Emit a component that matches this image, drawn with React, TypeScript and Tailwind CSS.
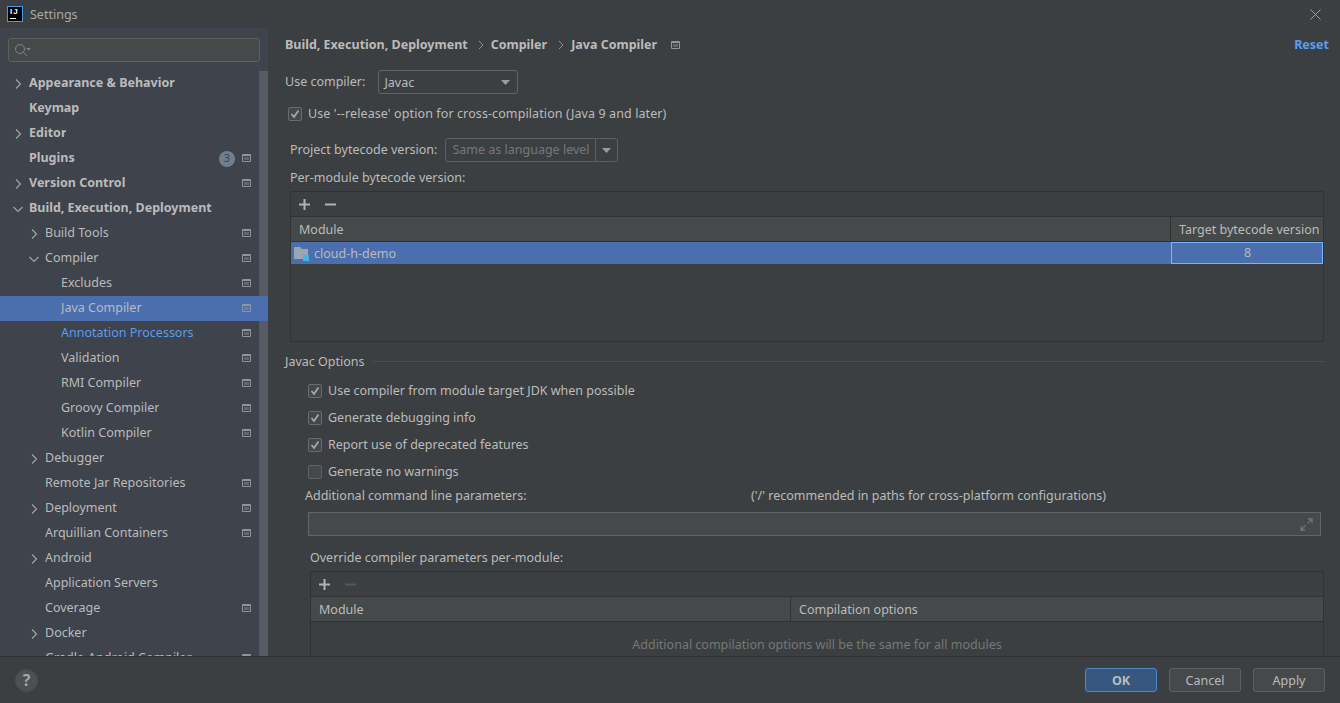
import type React from "react"

type TreeRow = {
  label: string
  level: number
  arrow?: "right" | "down"
  bold?: boolean
  icon?: boolean
  badge?: string
  selected?: boolean
  link?: boolean
}

const treeRows: TreeRow[] = [
  { label: "Appearance & Behavior", level: 0, arrow: "right", bold: true },
  { label: "Keymap", level: 0, bold: true },
  { label: "Editor", level: 0, arrow: "right", bold: true },
  { label: "Plugins", level: 0, bold: true, icon: true, badge: "3" },
  { label: "Version Control", level: 0, arrow: "right", bold: true, icon: true },
  { label: "Build, Execution, Deployment", level: 0, arrow: "down", bold: true },
  { label: "Build Tools", level: 1, arrow: "right", icon: true },
  { label: "Compiler", level: 1, arrow: "down", icon: true },
  { label: "Excludes", level: 2, icon: true },
  { label: "Java Compiler", level: 2, icon: true, selected: true },
  { label: "Annotation Processors", level: 2, icon: true, link: true },
  { label: "Validation", level: 2, icon: true },
  { label: "RMI Compiler", level: 2, icon: true },
  { label: "Groovy Compiler", level: 2, icon: true },
  { label: "Kotlin Compiler", level: 2, icon: true },
  { label: "Debugger", level: 1, arrow: "right" },
  { label: "Remote Jar Repositories", level: 1, icon: true },
  { label: "Deployment", level: 1, arrow: "right", icon: true },
  { label: "Arquillian Containers", level: 1, icon: true },
  { label: "Android", level: 1, arrow: "right" },
  { label: "Application Servers", level: 1 },
  { label: "Coverage", level: 1, icon: true },
  { label: "Docker", level: 1, arrow: "right" },
  { label: "Gradle-Android Compiler", level: 1, icon: true },
]

const optionRows = [
  { label: "Use compiler from module target JDK when possible", checked: true },
  { label: "Generate debugging info", checked: true },
  { label: "Report use of deprecated features", checked: true },
  { label: "Generate no warnings", checked: false },
]

function ProjectIcon({ className = "" }: { className?: string }) {
  return (
    <svg width="9" height="8" viewBox="0 0 9 8" className={`shrink-0 ${className}`}>
      <path d="M0.5 0.5h8v7h-8z" fill="none" stroke="currentColor" />
      <path d="M1 1h7v1H1z" fill="currentColor" />
      <path d="M2 3h5v3H2z" fill="currentColor" opacity="0.45" />
    </svg>
  )
}

function Arrow({ dir }: { dir: "right" | "down" }) {
  return (
    <svg width="10" height="10" viewBox="0 0 10 10" fill="none" stroke="#a0a4a8" strokeWidth="1.2">
      {dir === "right" ? <path d="M3 0.5l4.5 4.5-4.5 4.5" /> : <path d="M0.5 3l4.5 4.5 4.5-4.5" />}
    </svg>
  )
}

function CheckBox({ checked }: { checked: boolean }) {
  return (
    <span
      className={`flex h-[14px] w-[14px] shrink-0 items-center justify-center rounded-[2px] border ${
        checked ? "border-[#6b6b6b] bg-[#43494a]" : "border-[#646464] bg-[#43494a]"
      }`}
    >
      {checked && (
        <svg width="10" height="10" viewBox="0 0 10 10" fill="none" stroke="#a7a7a7" strokeWidth="1.8">
          <path d="M1.5 5l2.5 3 4.5-6.5" />
        </svg>
      )}
    </span>
  )
}

function PlusIcon({ color = "#afb1b3" }: { color?: string }) {
  return (
    <svg width="11" height="11" viewBox="0 0 11 11" stroke={color} strokeWidth="2">
      <path d="M0 5.5h11M5.5 0v11" />
    </svg>
  )
}

function MinusIcon({ color = "#afb1b3" }: { color?: string }) {
  return (
    <svg width="11" height="11" viewBox="0 0 11 11" stroke={color} strokeWidth="2">
      <path d="M0 5.5h11" />
    </svg>
  )
}

function Sidebar() {
  return (
    <aside className="flex h-full w-[268px] shrink-0 flex-col bg-[#3e434c]">
      <div className="px-2 pt-[10px] pb-[9px]">
        <div className="flex h-6 w-[252px] items-center rounded-[3px] border border-[#5e6060] bg-[#45494a] pl-[5px]">
          <svg width="18" height="14" viewBox="0 0 18 14" fill="none" stroke="#7f8588" strokeWidth="1">
            <circle cx="6" cy="6" r="4.5" />
            <path d="M9.5 9.5l3.5 3.5" />
            <path d="M12 5h5l-2.5 2.5z" fill="#7f8588" stroke="none" />
          </svg>
        </div>
      </div>
      <div className="relative min-h-0 flex-1 overflow-hidden">
        {/* scrollbar thumb */}
        <div className="absolute right-0 top-0 h-full w-[9px] bg-[#575b63]" />
        {treeRows.map((row) => (
          <div
            key={row.label}
            className={`relative flex h-[25px] items-center ${row.selected ? "bg-[#4b6eaf]" : ""} ${
              row.bold ? "font-bold text-[#bbbbbb]" : row.link ? "text-[#589df6]" : "text-[#bbbbbb]"
            }`}
          >
            <span className={`flex shrink-0 justify-end ${row.level === 0 ? "w-[23px]" : row.level === 1 ? "w-[39px]" : "w-[55px]"}`}>
              {row.arrow && <Arrow dir={row.arrow} />}
            </span>
            <span className="ml-[6px] truncate">{row.label}</span>
            {row.badge && (
              <span className="absolute left-[219px] flex h-4 w-4 items-center justify-center rounded-full bg-[#6e7f90] text-[11px] font-normal text-[#3e434c]">
                {row.badge}
              </span>
            )}
            {row.icon && <ProjectIcon className="absolute left-[242px] -mt-px text-[#8f959c]" />}
          </div>
        ))}
      </div>
    </aside>
  )
}

function TableHeaderCell({ children, className = "" }: { children: React.ReactNode; className?: string }) {
  return <div className={`flex h-full items-center whitespace-nowrap px-2 pt-[2px] text-[#bbbbbb] ${className}`}>{children}</div>
}

function MainPanel() {
  return (
    <main className="flex min-w-0 flex-1 flex-col overflow-hidden pl-[17px] pr-[11px] text-[#bbbbbb]">
      <div className="flex h-[34px] shrink-0 items-center font-bold">
        <span>Build, Execution, Deployment</span>
        <svg width="8" height="10" viewBox="0 0 8 10" fill="none" stroke="#8f9294" className="ml-[9px] mr-[6px]">
          <path d="M2 1l4 4-4 4" />
        </svg>
        <span>Compiler</span>
        <svg width="8" height="10" viewBox="0 0 8 10" fill="none" stroke="#8f9294" className="ml-[10px] mr-[6px]">
          <path d="M2 1l4 4-4 4" />
        </svg>
        <span>Java Compiler</span>
        <ProjectIcon className="ml-[14px] text-[#8f959c]" />
        <span className="ml-auto text-[#589df6]">Reset</span>
      </div>

      <div className="mt-[8px] flex h-6 shrink-0 items-center">
        <span>Use compiler:</span>
        <div className="ml-[13px] flex h-6 w-[140px] items-center justify-between rounded-[3px] border border-[#646464] bg-[#3c3f41] pl-[5px] pr-[7px]">
          <span className="pt-[2px]">Javac</span>
          <svg width="9" height="5" viewBox="0 0 9 5">
            <path d="M0 0h9L4.5 5z" fill="#9a9da0" />
          </svg>
        </div>
      </div>

      <label className="mt-[10px] flex h-[20px] shrink-0 items-center gap-[6px] pl-[3px]">
        <CheckBox checked />
        <span className="tracking-[0.1px]">Use '--release' option for cross-compilation (Java 9 and later)</span>
      </label>

      <div className="mt-[14px] flex h-6 shrink-0 items-center pl-[5px]">
        <span>Project bytecode version:</span>
        <div className="ml-2 flex h-6 w-[173px] items-center rounded-[3px] border border-[#5e6060] bg-[#3c3f41]">
          <span className="flex-1 whitespace-nowrap pl-[6px] text-[#777777]">Same as language level</span>
          <span className="flex h-full w-[22px] shrink-0 items-center justify-center border-l border-[#5e6060]">
            <svg width="9" height="5" viewBox="0 0 9 5">
              <path d="M0 0h9L4.5 5z" fill="#9a9da0" />
            </svg>
          </span>
        </div>
      </div>

      <div className="ml-[5px] mt-[7px] h-[18px] shrink-0 leading-[18px]">Per-module bytecode version:</div>

      <div className="ml-[5px] mr-[5px] mt-[4px] h-[151px] shrink-0 border border-[#323232]">
        <div className="flex h-[25px] items-center gap-[15px] border-b border-[#323232] pl-[8px]">
          <PlusIcon />
          <MinusIcon />
        </div>
        <div className="flex h-[25px] border-b border-[#323232] bg-[#45494a]">
          <TableHeaderCell className="flex-1">Module</TableHeaderCell>
          <TableHeaderCell className="w-[153px] border-l border-[#323232]">Target bytecode version</TableHeaderCell>
        </div>
        <div className="flex h-[22px] bg-[#4b6eaf]">
          <div className="flex flex-1 items-center gap-[4px] pl-[3px]">
            <svg width="16" height="14" viewBox="0 0 16 14" className="mt-px">
              <path d="M0 0h6l2 2h6v10H0z" fill="#9aa7b0" />
              <rect x="9" y="8" width="6" height="6" fill="#40b6e0" />
            </svg>
            <span className="pt-[2px]">cloud-h-demo</span>
          </div>
          <div className="flex w-[152px] items-center justify-center border border-[#75b4ff] pl-px pt-px">8</div>
        </div>
      </div>

      <div className="mr-[5px] mt-[10px] flex h-[20px] shrink-0 items-center">
        <span>Javac Options</span>
        <div className="ml-[8px] -mt-px h-px flex-1 bg-[#4b4f51]" />
      </div>

      <div className="mt-[9px] flex shrink-0 flex-col gap-[7px] pl-[23px]">
        {optionRows.map((row) => (
          <div key={row.label} className="flex h-[20px] items-center gap-[6px]">
            <CheckBox checked={row.checked} />
            <span>{row.label}</span>
          </div>
        ))}
      </div>

      <div className="ml-[20px] mt-[5px] flex h-[18px] shrink-0 items-center">
        <span className="w-[446px]">Additional command line parameters:</span>
        <span>('/' recommended in paths for cross-platform configurations)</span>
      </div>

      <div className="ml-[23px] mr-[8px] mt-[7px] flex h-[24px] shrink-0 items-center justify-end border border-[#646464] bg-[#45494a] pr-[7px]">
        <svg width="13" height="13" viewBox="0 0 13 13" fill="none" stroke="#6f7375" strokeWidth="1.3">
          <path d="M7.5 5.5L12 1M8 1h4v4" />
          <path d="M5.5 7.5L1 12M1 8v4h4" />
        </svg>
      </div>

      <div className="ml-[25px] mt-[13px] h-[18px] shrink-0 leading-[18px]">Override compiler parameters per-module:</div>

      <div className="ml-[25px] mr-[5px] mt-[4px] flex-1 border-x border-t border-[#323232]">
        <div className="flex h-[25px] items-center gap-[15px] border-b border-[#323232] pl-[8px]">
          <PlusIcon />
          <MinusIcon color="#55585a" />
        </div>
        <div className="flex h-[25px] border-b border-[#323232] bg-[#45494a]">
          <TableHeaderCell className="w-[479px]">Module</TableHeaderCell>
          <TableHeaderCell className="flex-1 border-l border-[#323232]">Compilation options</TableHeaderCell>
        </div>
        <div className="pt-[14px] text-center text-[#777777]">Additional compilation options will be the same for all modules</div>
      </div>
    </main>
  )
}

export default function App() {
  return (
    <div className="flex h-[703px] w-[1340px] flex-col overflow-hidden bg-[#3c3f41] font-['Noto_Sans','Open_Sans',sans-serif] text-[12.5px]">
      <header className="flex h-[28px] shrink-0 items-center pl-[7px] pr-[19px] text-[#a9a9a9]">
        <span className="flex h-4 w-4 flex-col border border-[#3d9bf0] bg-black pl-[2px] pt-px font-['Liberation_Sans',sans-serif] text-[8px] font-bold leading-[8px] tracking-[1px] text-white">
          IJ
          <span className="mt-[2px] h-px w-[6px] bg-white" />
        </span>
        <span className="ml-[7px] pt-[2px]">Settings</span>
        <svg width="11" height="11" viewBox="0 0 11 11" stroke="#a0a0a0" className="ml-auto">
          <path d="M0.5 0.5l10 10M10.5 0.5l-10 10" />
        </svg>
      </header>
      <div className="flex min-h-0 flex-1">
        <Sidebar />
        <MainPanel />
      </div>
      <footer className="flex h-[47px] shrink-0 items-center justify-between border-t border-[#323232] pl-[15px] pr-[15px] text-[#bbbbbb]">
        <span className="flex h-[23px] w-[23px] items-center justify-center rounded-full border border-[#4a4d4f] bg-[#4c5052] text-[16px] font-bold text-[#a5a7a9]">?</span>
        <div className="flex gap-3">
          <button className="h-6 w-[72px] rounded-[3px] border border-[#4c87c8] bg-[#365880] pt-[2px] font-bold">OK</button>
          <button className="h-6 w-[72px] rounded-[3px] border border-[#5e6060] bg-[#45494a] pt-[2px]">Cancel</button>
          <button className="h-6 w-[72px] rounded-[3px] border border-[#5e6060] bg-[#45494a] pt-[2px]">Apply</button>
        </div>
      </footer>
    </div>
  )
}
